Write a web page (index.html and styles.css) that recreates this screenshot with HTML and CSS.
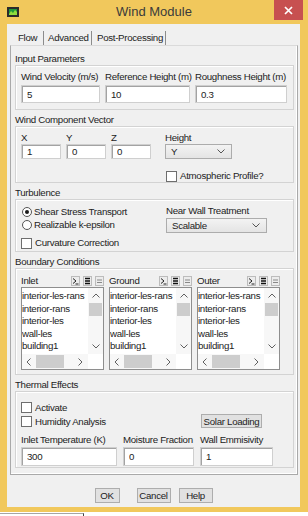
FILE: index.html
```html
<!DOCTYPE html>
<html lang="en">

<head>
  <meta charset="UTF-8">
  <meta name="viewport" content="width=device-width, initial-scale=1.0">
  <title>Wind Module</title>
  <link rel="stylesheet" href="styles.css">
</head>

<body>

  <div class="window">
    <div class="titlebar">
      <svg class="app-icon" width="12" height="10" viewBox="0 0 12 10">
        <rect x="0" y="0" width="12" height="10" fill="#2b2b2b" />
        <rect x="2" y="2" width="8" height="6" fill="#1f9a3a" />
        <path d="M2 7 L4 4 L6 6 L8 3 L10 5 V8 H2 Z" fill="#8fdc3c" />
      </svg>
      <div class="title">Wind Module</div>
      <div class="close">
        <svg width="9" height="9" viewBox="0 0 9 9">
          <path d="M1 1 L8 8 M8 1 L1 8" stroke="#fff" stroke-width="1.7" />
        </svg>
      </div>
    </div>

    <div class="client">
      <div class="tabs">
        <span class="tab tab-flow active">Flow</span>
        <span class="tab tab-adv">Advanced</span>
        <span class="tab tab-post">Post-Processing</span>
      </div>

      <div class="panel">
        <div class="caption">Input Parameters</div>
        <div class="group group-input">
          <div class="fields fields-input">
            <label>Wind Velocity (m/s)</label>
            <label>Reference Height (m)</label>
            <label>Roughness Height (m)</label>
            <input class="field" type="text" value="5">
            <input class="field" type="text" value="10">
            <input class="field" type="text" value="0.3">
          </div>
        </div>

        <div class="caption">Wind Component Vector</div>
        <div class="group group-vector">
          <div class="row">
            <div class="xyz">
              <label>X</label>
              <label>Y</label>
              <label>Z</label>
              <input class="field" type="text" value="1">
              <input class="field" type="text" value="0">
              <input class="field" type="text" value="0">
            </div>
            <div class="side">
              <label>Height</label>
              <div class="select select-height">
                <span>Y</span>
                <svg width="8" height="5" viewBox="0 0 8 5"><path d="M0.5 0.5 L4 4 L7.5 0.5" fill="none" stroke="#555" /></svg>
              </div>
              <div class="check check-atm"><span class="box"></span>Atmospheric Profile?</div>
            </div>
          </div>
        </div>

        <div class="caption">Turbulence</div>
        <div class="group group-turb">
          <div class="row">
            <div class="options">
              <div class="radio checked"><span class="dot"></span>Shear Stress Transport</div>
              <div class="radio"><span class="dot"></span>Realizable k-epsilon</div>
              <div class="check check-curv"><span class="box"></span>Curvature Correction</div>
            </div>
            <div class="side">
              <label>Near Wall Treatment</label>
              <div class="select select-wall">
                <span>Scalable</span>
                <svg width="8" height="5" viewBox="0 0 8 5"><path d="M0.5 0.5 L4 4 L7.5 0.5" fill="none" stroke="#555" /></svg>
              </div>
            </div>
          </div>
        </div>

        <div class="caption">Boundary Conditions</div>
        <div class="group group-bc">
          <div class="lists">
            <div class="zone">
              <div class="zone-head">
                <span>Inlet</span>
                <span class="tools">
                  <span class="tool"><svg width="7" height="8" viewBox="0 0 7 8"><path d="M1 1.5 L4 4 L1 6.5 M3.5 7 H6.5" fill="none" stroke="#222" /></svg></span>
                  <span class="tool"><svg width="7" height="8" viewBox="0 0 7 8"><path d="M1 1.5 H6 M1 4 H6 M1 6.5 H6" stroke="#111" stroke-width="1.3" /></svg></span>
                  <span class="tool"><svg width="7" height="8" viewBox="0 0 7 8"><path d="M1 3 H6 M1 5.5 H6" stroke="#888" /></svg></span>
                </span>
              </div>
              <div class="list">
                <div class="items">
                  <div>interior-les-rans</div>
                  <div>interior-rans</div>
                  <div>interior-les</div>
                  <div>wall-les</div>
                  <div>building1</div>
                </div>
                <div class="vscroll">
                  <span class="arrow"><svg width="8" height="5" viewBox="0 0 8 5"><path d="M0.5 4.5 L4 1 L7.5 4.5" fill="none" stroke="#606060" /></svg></span>
                  <span class="thumb"></span>
                  <span class="track"></span>
                  <span class="arrow"><svg width="8" height="5" viewBox="0 0 8 5"><path d="M0.5 0.5 L4 4 L7.5 0.5" fill="none" stroke="#606060" /></svg></span>
                </div>
                <div class="hscroll">
                  <span class="arrow arrow-l"><svg width="5" height="8" viewBox="0 0 5 8"><path d="M4.5 0.5 L1 4 L4.5 7.5" fill="none" stroke="#606060" /></svg></span>
                  <span class="thumb"></span>
                  <span class="track"></span>
                  <span class="arrow arrow-r"><svg width="5" height="8" viewBox="0 0 5 8"><path d="M0.5 0.5 L4 4 L0.5 7.5" fill="none" stroke="#606060" /></svg></span>
                </div>
                <div class="corner"></div>
              </div>
            </div>

            <div class="zone">
              <div class="zone-head">
                <span>Ground</span>
                <span class="tools">
                  <span class="tool"><svg width="7" height="8" viewBox="0 0 7 8"><path d="M1 1.5 L4 4 L1 6.5 M3.5 7 H6.5" fill="none" stroke="#222" /></svg></span>
                  <span class="tool"><svg width="7" height="8" viewBox="0 0 7 8"><path d="M1 1.5 H6 M1 4 H6 M1 6.5 H6" stroke="#111" stroke-width="1.3" /></svg></span>
                  <span class="tool"><svg width="7" height="8" viewBox="0 0 7 8"><path d="M1 3 H6 M1 5.5 H6" stroke="#888" /></svg></span>
                </span>
              </div>
              <div class="list">
                <div class="items">
                  <div>interior-les-rans</div>
                  <div>interior-rans</div>
                  <div>interior-les</div>
                  <div>wall-les</div>
                  <div>building1</div>
                </div>
                <div class="vscroll">
                  <span class="arrow"><svg width="8" height="5" viewBox="0 0 8 5"><path d="M0.5 4.5 L4 1 L7.5 4.5" fill="none" stroke="#606060" /></svg></span>
                  <span class="thumb"></span>
                  <span class="track"></span>
                  <span class="arrow"><svg width="8" height="5" viewBox="0 0 8 5"><path d="M0.5 0.5 L4 4 L7.5 0.5" fill="none" stroke="#606060" /></svg></span>
                </div>
                <div class="hscroll">
                  <span class="arrow arrow-l"><svg width="5" height="8" viewBox="0 0 5 8"><path d="M4.5 0.5 L1 4 L4.5 7.5" fill="none" stroke="#606060" /></svg></span>
                  <span class="thumb"></span>
                  <span class="track"></span>
                  <span class="arrow arrow-r"><svg width="5" height="8" viewBox="0 0 5 8"><path d="M0.5 0.5 L4 4 L0.5 7.5" fill="none" stroke="#606060" /></svg></span>
                </div>
                <div class="corner"></div>
              </div>
            </div>

            <div class="zone">
              <div class="zone-head">
                <span>Outer</span>
                <span class="tools">
                  <span class="tool"><svg width="7" height="8" viewBox="0 0 7 8"><path d="M1 1.5 L4 4 L1 6.5 M3.5 7 H6.5" fill="none" stroke="#222" /></svg></span>
                  <span class="tool"><svg width="7" height="8" viewBox="0 0 7 8"><path d="M1 1.5 H6 M1 4 H6 M1 6.5 H6" stroke="#111" stroke-width="1.3" /></svg></span>
                  <span class="tool"><svg width="7" height="8" viewBox="0 0 7 8"><path d="M1 3 H6 M1 5.5 H6" stroke="#888" /></svg></span>
                </span>
              </div>
              <div class="list">
                <div class="items">
                  <div>interior-les-rans</div>
                  <div>interior-rans</div>
                  <div>interior-les</div>
                  <div>wall-les</div>
                  <div>building1</div>
                </div>
                <div class="vscroll">
                  <span class="arrow"><svg width="8" height="5" viewBox="0 0 8 5"><path d="M0.5 4.5 L4 1 L7.5 4.5" fill="none" stroke="#606060" /></svg></span>
                  <span class="thumb"></span>
                  <span class="track"></span>
                  <span class="arrow"><svg width="8" height="5" viewBox="0 0 8 5"><path d="M0.5 0.5 L4 4 L7.5 0.5" fill="none" stroke="#606060" /></svg></span>
                </div>
                <div class="hscroll">
                  <span class="arrow arrow-l"><svg width="5" height="8" viewBox="0 0 5 8"><path d="M4.5 0.5 L1 4 L4.5 7.5" fill="none" stroke="#606060" /></svg></span>
                  <span class="thumb"></span>
                  <span class="track"></span>
                  <span class="arrow arrow-r"><svg width="5" height="8" viewBox="0 0 5 8"><path d="M0.5 0.5 L4 4 L0.5 7.5" fill="none" stroke="#606060" /></svg></span>
                </div>
                <div class="corner"></div>
              </div>
            </div>
          </div>
        </div>

        <div class="caption">Thermal Effects</div>
        <div class="group group-thermal">
          <div class="thermal-top">
            <div class="checks">
              <div class="check"><span class="box"></span>Activate</div>
              <div class="check"><span class="box"></span>Humidity Analysis</div>
            </div>
            <button class="btn btn-solar">Solar Loading</button>
          </div>
          <div class="fields fields-thermal">
            <label>Inlet Temperature (K)</label>
            <label>Moisture Fraction</label>
            <label>Wall Emmisivity</label>
            <input class="field" type="text" value="300">
            <input class="field" type="text" value="0">
            <input class="field" type="text" value="1">
          </div>
        </div>
      </div>

      <div class="buttons">
        <button class="btn btn-ok">OK</button>
        <button class="btn btn-cancel">Cancel</button>
        <button class="btn btn-help">Help</button>
      </div>
    </div>
  </div>

  <div class="desk"><div class="desk-line"></div></div>

</body>

</html>
```

FILE: styles.css
```css
* {
  box-sizing: border-box;
}

html,
body {
  margin: 0;
}

body {
  background: #fff;
  color: #222;
  font-family: "Liberation Sans", Arial, sans-serif;
  font-size: 9.7px;
  letter-spacing: -0.3px;
}

/* window frame */

.window {
  width: 308px;
  height: 512px;
  background: #f1c85c;
  padding-bottom: 5px;
  display: flex;
  flex-direction: column;
}

.titlebar {
  height: 24px;
  display: grid;
  grid-template-columns: 1fr auto 1fr;
  align-items: start;
}

.app-icon {
  margin: 7px 0 0 7px;
}

.title {
  margin-top: 4px;
  font-size: 13px;
  line-height: 15px;
  letter-spacing: 0;
  color: #3b3b3b;
}

.close {
  justify-self: end;
  width: 29px;
  height: 20px;
  margin-right: 5px;
  background: #c75050;
  display: flex;
  align-items: center;
  justify-content: center;
}

.client {
  flex: 1;
  margin: 0 8px 0 7px;
  padding-top: 3px;
  background: #f0f0f0;
  display: flex;
  flex-direction: column;
}

/* tabs */

.tabs {
  display: flex;
  height: 18px;
  padding-left: 6px;
}

.tab {
  margin-top: 4px;
  height: 14px;
  line-height: 14px;
  white-space: nowrap;
  border-right: 1px solid #8c8c8c;
}

.tab-flow {
  width: 31px;
  padding-left: 5px;
}

.tab-adv {
  width: 48px;
  padding-left: 4px;
}

.tab-post {
  width: 74px;
  padding-left: 5px;
}

.panel {
  height: 430px;
  margin: 0 2px 0 3px;
  padding: 6px 3px 0 4px;
  border: 1px solid #a9a9a9;
  border-top-color: #dadada;
  box-shadow: inset -1px -1px 0 #fff;
}

.caption {
  line-height: 13px;
  margin-top: 3px;
  white-space: nowrap;
}

.caption:first-child {
  margin-top: 0;
}

.group {
  border: 1px solid #d3d3d3;
  box-shadow: inset 1px 1px 0 #fff;
  padding: 5px 4px 0 5px;
}

label {
  display: block;
  line-height: 12px;
  white-space: nowrap;
}

.field {
  width: 100%;
  height: 100%;
  padding: 0 0 0 5px;
  font: inherit;
  letter-spacing: inherit;
  color: #222;
  background: #fff;
  border: 1px solid #cfcfcf;
  box-shadow: inset 1px 1px 0 #a3a3a3;
  outline: none;
}

.fields {
  display: grid;
}

/* input parameters */

.group-input {
  height: 45px;
}

.fields-input {
  grid-template-columns: 79px 85px 92px;
  grid-template-rows: 12px 18px;
  column-gap: 5px;
  row-gap: 2px;
}

/* wind component vector */

.group-vector {
  height: 57px;
}

.row {
  display: flex;
}

.xyz {
  width: 144px;
  display: grid;
  grid-template-columns: 40px 40px 40px;
  grid-template-rows: 12px 15px;
  column-gap: 5px;
}

.side {
  display: flex;
  flex-direction: column;
}

.select {
  height: 15px;
  padding: 0 6px 0 5px;
  display: flex;
  align-items: center;
  justify-content: space-between;
  background: linear-gradient(#f3f3f3, #e4e4e4);
  border: 1px solid #acacac;
}

.select-height {
  width: 67px;
}

.select-wall {
  width: 101px;
  margin-top: 1px;
}

.check {
  display: flex;
  align-items: center;
  gap: 3px;
  white-space: nowrap;
}

.box {
  width: 11px;
  height: 11px;
  background: #fff;
  border: 1px solid #6e6e6e;
}

.check-atm {
  margin: 11px 0 0 1px;
  line-height: 12px;
}

/* turbulence */

.group-turb {
  height: 53px;
}

.options {
  width: 145px;
}

.radio {
  display: flex;
  align-items: center;
  gap: 2px;
  line-height: 13px;
  white-space: nowrap;
}

.dot {
  width: 10px;
  height: 10px;
  margin-left: 1px;
  border: 1px solid #555;
  border-radius: 50%;
  background: #fff;
  display: flex;
  align-items: center;
  justify-content: center;
}

.radio.checked .dot::after {
  content: "";
  width: 4px;
  height: 4px;
  border-radius: 50%;
  background: #1a1a1a;
}

.check-curv {
  margin-top: 6px;
  line-height: 12px;
}

/* boundary conditions */

.group-bc {
  height: 107px;
  padding-top: 6px;
}

.lists {
  display: grid;
  grid-template-columns: repeat(3, 83px);
  column-gap: 5px;
}

.zone-head {
  height: 12px;
  line-height: 12px;
  display: flex;
  justify-content: space-between;
  align-items: center;
}

.tools {
  display: flex;
  gap: 3px;
}

.tool {
  width: 9px;
  height: 10px;
  background: #ececec;
  border: 1px solid #bcbcbc;
  display: flex;
  align-items: center;
  justify-content: center;
}

.list {
  height: 83px;
  background: #fff;
  border: 1px solid #8e8e8e;
  display: grid;
  grid-template-columns: 1fr 15px;
  grid-template-rows: 1fr 15px;
  overflow: hidden;
}

.items {
  padding-top: 2px;
  line-height: 12.5px;
  white-space: nowrap;
  overflow: hidden;
}

.vscroll {
  display: flex;
  flex-direction: column;
  background: #f7f7f7;
}

.vscroll .arrow {
  height: 15px;
  display: flex;
  align-items: center;
  justify-content: center;
}

.vscroll .thumb {
  height: 13px;
  margin: 0 1px;
  background: #cdcdcd;
}

.track {
  flex: 1;
}

.hscroll {
  display: flex;
  align-items: center;
  background: #f7f7f7;
}

.hscroll .arrow {
  height: 15px;
  display: flex;
  align-items: center;
  justify-content: center;
}

.arrow-l {
  width: 13px;
}

.arrow-r {
  width: 15px;
}

.hscroll .thumb {
  width: 28px;
  height: 13px;
  margin-left: 1px;
  background: #cdcdcd;
}

.corner {
  background: #fff;
}

/* thermal effects */

.group-thermal {
  height: 77px;
  padding-top: 8px;
}

.thermal-top {
  display: flex;
  align-items: flex-end;
}

.checks {
  width: 180px;
}

.checks .check {
  height: 14px;
}

.btn {
  font: inherit;
  letter-spacing: inherit;
  color: #222;
  background: #e1e1e1;
  border: 1px solid #adadad;
  padding: 0;
  line-height: 13px;
}

.btn-solar {
  width: 61px;
  height: 14px;
}

.fields-thermal {
  margin-top: 6px;
  grid-template-columns: 96px 71px 73px;
  grid-template-rows: 12px 19px;
  column-gap: 6px;
  row-gap: 1px;
}

/* dialog buttons */

.buttons {
  margin-top: 13px;
  display: flex;
  justify-content: center;
}

.buttons .btn {
  height: 15px;
}

.btn-ok {
  width: 25px;
  margin-right: 17px;
}

.btn-cancel {
  width: 34px;
  margin-right: 8px;
}

.btn-help {
  width: 34px;
}

.desk {
  height: 4px;
  padding-top: 1px;
}

.desk-line {
  width: 84px;
  height: 3px;
  border-top: 1px solid #a5a5a5;
  border-right: 1px solid #444;
}
```
